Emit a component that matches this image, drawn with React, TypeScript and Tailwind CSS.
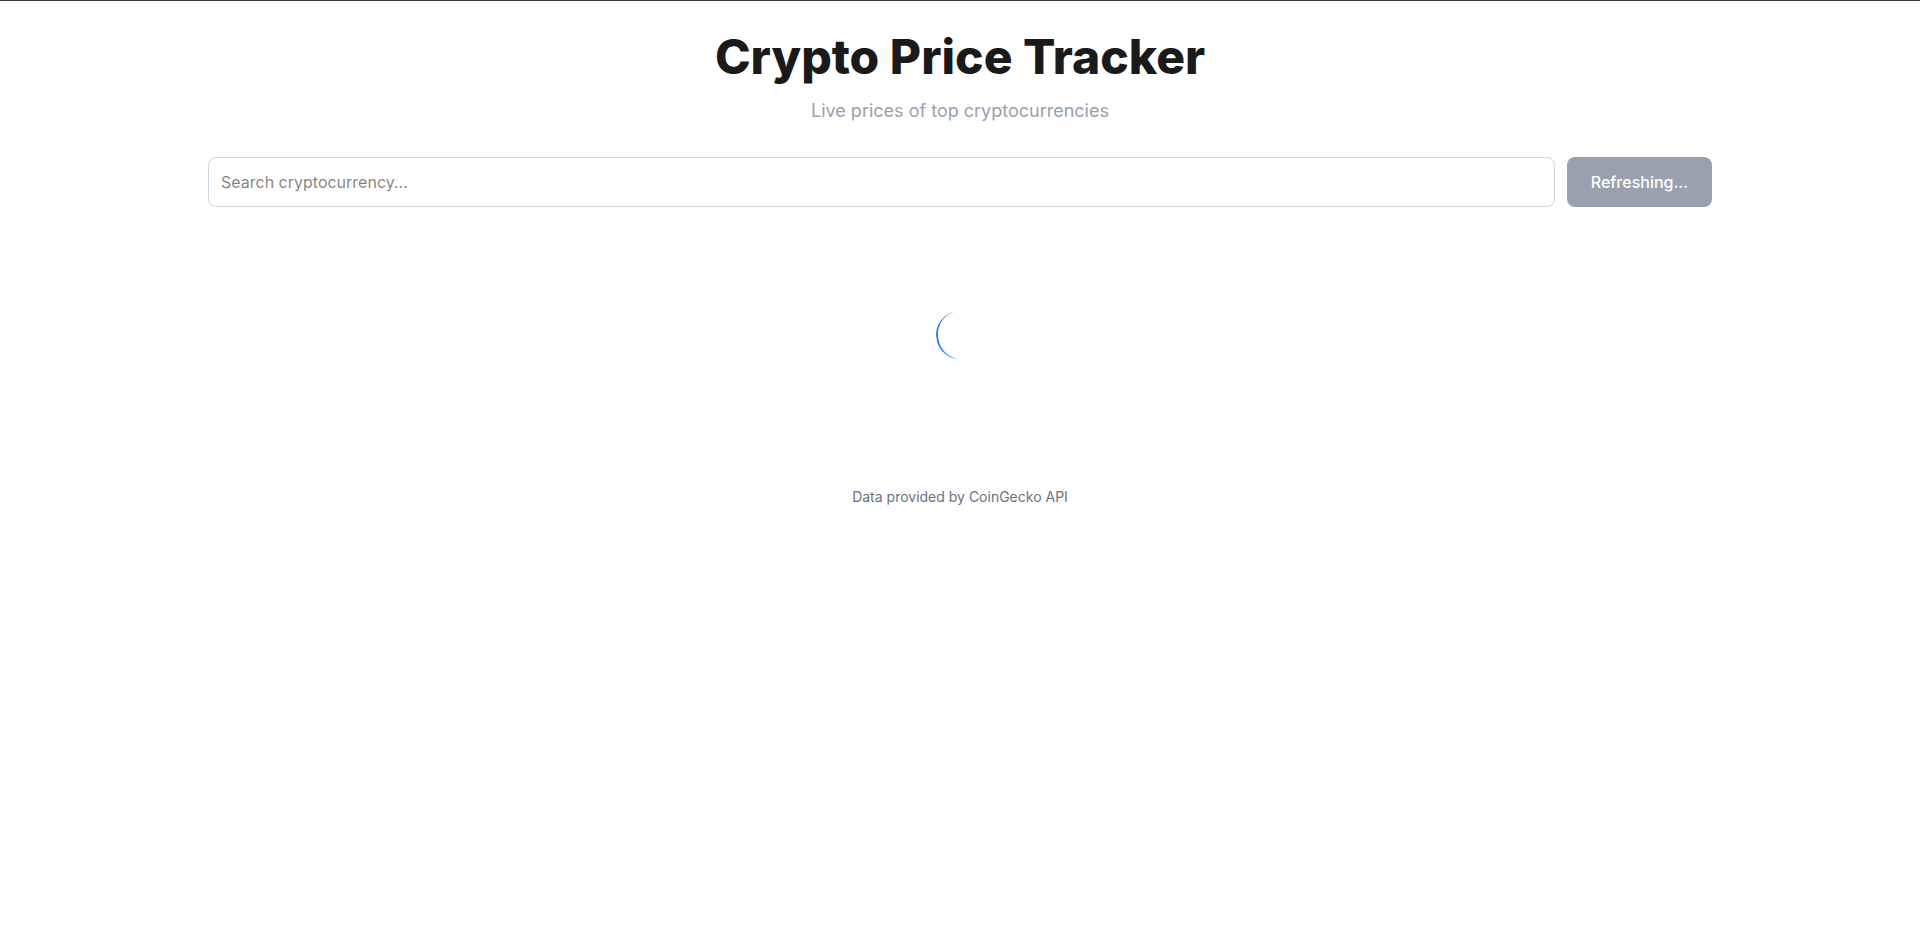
import { useState } from "react";

export default function App() {
  const [query, setQuery] = useState("");

  return (
    <div className="min-h-screen bg-white border-t border-[#3a3a3a]" style={{ fontFamily: "Inter, 'Noto Sans', sans-serif" }}>
      <main className="container mx-auto px-4 py-8">
        <header className="text-center mb-8">
          <h1 className="text-5xl font-extrabold text-[#1a1a1a]">Crypto Price Tracker</h1>
          <p className="mt-4 text-lg text-gray-400">Live prices of top cryptocurrencies</p>
        </header>

        <div className="flex gap-3">
          <input
            className="flex-1 px-3 py-3 text-base border border-gray-300 rounded-lg outline-none"
            placeholder="Search cryptocurrency..."
            value={query}
            onChange={(e) => setQuery(e.target.value)}
          />
          <button disabled className="px-6 rounded-lg bg-gray-400 text-white text-base font-medium">
            Refreshing...
          </button>
        </div>

        <div className="flex justify-center items-center h-64">
          <div className="w-12 h-12 rounded-full border-b-2 border-blue-500 rotate-[82deg]" />
        </div>

        <footer className="mt-6 text-center text-sm text-gray-500">Data provided by CoinGecko API</footer>
      </main>
    </div>
  );
}
